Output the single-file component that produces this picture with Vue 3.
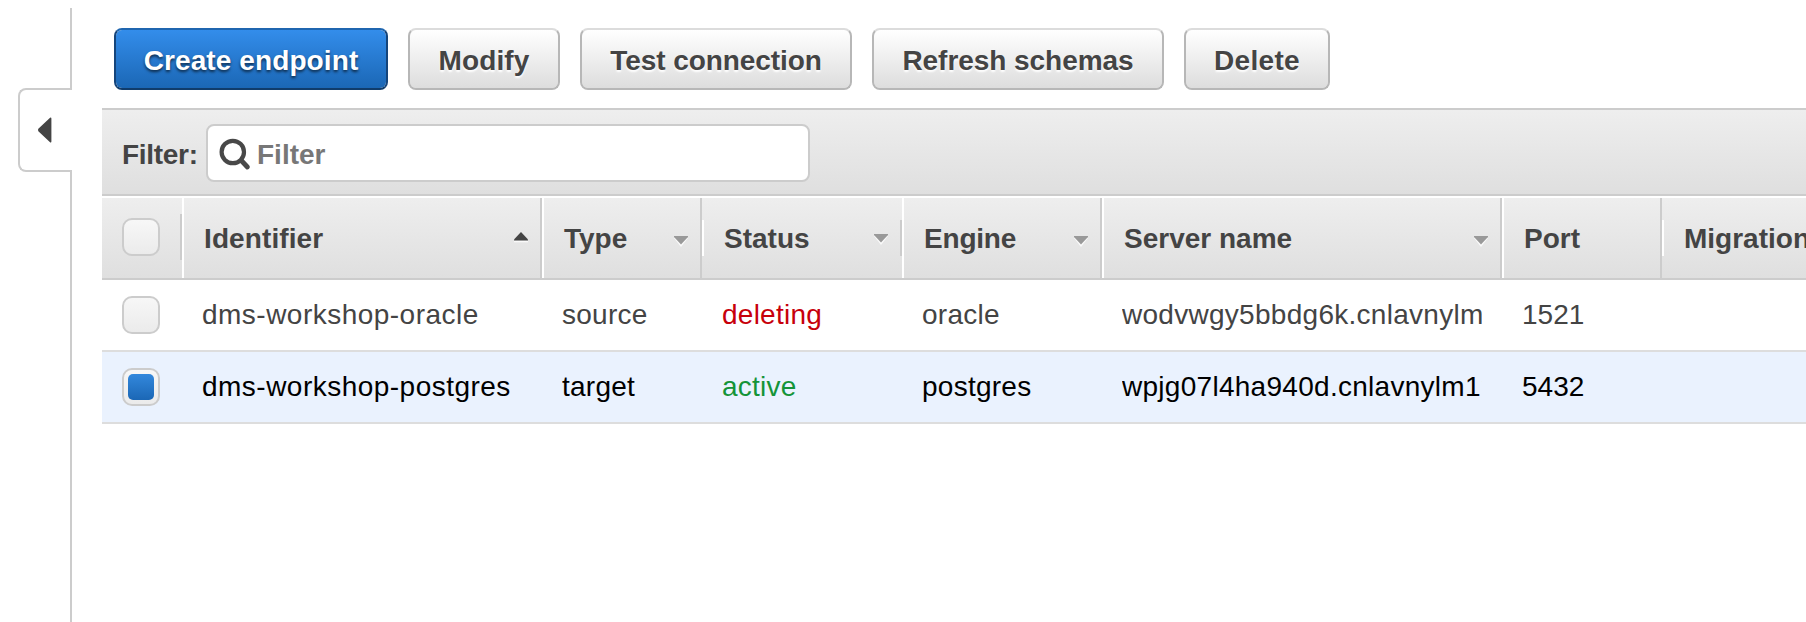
<script setup>
import { ref } from 'vue'

const filter = ref('')

const actions = [
  { label: 'Create endpoint', kind: 'create' },
  { label: 'Modify', kind: 'modify' },
  { label: 'Test connection', kind: 'test' },
  { label: 'Refresh schemas', kind: 'refresh' },
  { label: 'Delete', kind: 'delete' },
]

const columns = [
  { key: 'identifier', label: 'Identifier', sort: 'up' },
  { key: 'type', label: 'Type', sort: 'down' },
  { key: 'status', label: 'Status', sort: 'down' },
  { key: 'engine', label: 'Engine', sort: 'down' },
  { key: 'server', label: 'Server name', sort: 'down' },
  { key: 'port', label: 'Port', sort: null },
  { key: 'migration', label: 'Migration', sort: null },
]

const rows = ref([
  {
    identifier: 'dms-workshop-oracle',
    type: 'source',
    status: 'deleting',
    engine: 'oracle',
    server: 'wodvwgy5bbdg6k.cnlavnylm',
    port: '1521',
    migration: '',
    selected: false,
  },
  {
    identifier: 'dms-workshop-postgres',
    type: 'target',
    status: 'active',
    engine: 'postgres',
    server: 'wpjg07l4ha940d.cnlavnylm1r',
    port: '5432',
    migration: '',
    selected: true,
  },
])
</script>

<template>
  <div class="page">
    <aside class="rail">
      <div class="rail-line rail-top"></div>
      <button class="collapse" aria-label="Collapse navigation">
        <svg width="14" height="26" viewBox="0 0 14 26">
          <path d="M12.6 1.4 0.9 12.4v1.2l11.7 11z" fill="#444" stroke="#444" stroke-width="1.6" stroke-linejoin="round" />
        </svg>
      </button>
      <div class="rail-line rail-bottom"></div>
    </aside>

    <main class="content">
      <div class="toolbar">
        <button v-for="a in actions" :key="a.kind" class="btn" :class="a.kind">{{ a.label }}</button>
      </div>

      <div class="filter-bar">
        <label class="filter-label" for="filter">Filter:</label>
        <div class="search">
          <svg class="search-icon" width="32" height="34" viewBox="0 0 32 34">
            <circle cx="13.8" cy="15" r="11.2" fill="none" stroke="#484848" stroke-width="4.2" />
            <path d="M22.3 23.5 28.4 30" stroke="#484848" stroke-width="4.8" stroke-linecap="round" />
          </svg>
          <input id="filter" v-model="filter" class="search-input" type="text" placeholder="Filter" />
        </div>
      </div>

      <div class="grid head">
        <div class="th pick"><input class="check" type="checkbox" aria-label="Select all" /></div>
        <div v-for="c in columns" :key="c.key" class="th" :class="c.key">
          <span class="title">{{ c.label }}</span>
          <svg v-if="c.sort" class="arrow" :class="c.sort" width="14" height="12" viewBox="0 0 14 12">
            <template v-if="c.sort === 'up'">
              <path d="M0 8.5h14v1.8H0z" fill="#fff" opacity=".8" />
              <path d="M7 0 14 7.4V8.5H0V7.4z" fill="#444" />
            </template>
            <template v-else>
              <path d="M0 2h14L7 11z" fill="#fff" opacity=".8" />
              <path d="M0 0h14v1L7 8.6 0 1z" fill="#999" />
            </template>
          </svg>
        </div>
      </div>

      <div v-for="r in rows" :key="r.identifier" class="grid row" :class="{ selected: r.selected }">
        <div class="td pick"><input v-model="r.selected" class="check" type="checkbox" aria-label="Select row" /></div>
        <div v-for="c in columns" :key="c.key" class="td" :class="[c.key, c.key === 'status' ? r.status : '']">
          <span class="clip">{{ r[c.key] }}</span>
        </div>
      </div>
    </main>
  </div>
</template>

<style>
body {
  background: #fff;
  overflow: hidden;
}
</style>

<style scoped>
.page,
.page * {
  box-sizing: border-box;
}
.page {
  display: flex;
  width: 1806px;
  height: 622px;
  overflow: hidden;
  background: #fff;
  color: #444;
  font-family: "Liberation Sans", Arial, sans-serif;
  font-size: 28px;
}
.rail {
  display: flex;
  flex-direction: column;
  align-items: flex-end;
  width: 72px;
  padding-top: 8px;
  flex: none;
}
.rail-line {
  width: 2px;
  background: #ccc;
}
.rail-top {
  height: 80px;
}
.rail-bottom {
  flex: 1;
}
.collapse {
  display: flex;
  align-items: center;
  width: 54px;
  height: 84px;
  padding: 0 0 0 18px;
  border: 2px solid #ccc;
  border-right: 0;
  border-radius: 8px 0 0 8px;
  background: #fff;
}
.content {
  flex: none;
  width: 1704px;
  margin-left: 30px;
}
.toolbar {
  display: flex;
  gap: 20px;
  height: 108px;
  padding: 28px 0 0 12px;
}
.btn {
  height: 62px;
  padding: 4px 0 0;
  border: 2px solid #b7b7b7;
  border-top-color: #dcdcdc;
  border-radius: 8px;
  background: linear-gradient(#fff, #ddd) padding-box;
  color: #444;
  font: bold 28px/32px "Liberation Sans", Arial, sans-serif;
  text-shadow: 0 2px 2px #fff;
  white-space: nowrap;
}
.btn.create {
  width: 274px;
  border-color: #1f66b0 #15457b #103c6b;
  background: linear-gradient(#338deb, #1b67b5) padding-box;
  color: #fff;
  text-shadow: 0 2px 3px rgba(0, 0, 0, 0.65);
  letter-spacing: 0.1px;
}
.btn.modify {
  width: 152px;
  letter-spacing: 0.1px;
}
.btn.test {
  width: 272px;
  letter-spacing: -0.08px;
}
.btn.refresh {
  width: 292px;
  letter-spacing: -0.05px;
}
.btn.delete {
  width: 146px;
  letter-spacing: 0.3px;
}
.filter-bar {
  display: flex;
  align-items: center;
  height: 88px;
  padding: 2px 0 0 20px;
  border-top: 2px solid #ccc;
  border-bottom: 2px solid #ccc;
  background: linear-gradient(#eee, #dfdfdf);
}
.filter-label {
  width: 84px;
  padding-top: 3px;
  font-weight: bold;
  letter-spacing: -0.3px;
}
.search {
  display: flex;
  align-items: center;
  width: 604px;
  height: 58px;
  padding: 2px 12px 0 11px;
  border: 2px solid #ccc;
  border-radius: 8px;
  background: #fff;
}
.search-icon {
  flex: none;
}
.search-input {
  flex: 1;
  margin-left: 6px;
  padding: 2px 0 0;
  border: 0;
  outline: 0;
  background: none;
  color: #444;
  font: bold 28px/36px "Liberation Sans", Arial, sans-serif;
}
.search-input::placeholder {
  color: #777;
  opacity: 1;
}
.grid {
  display: grid;
  grid-template-columns: 80px 360px 160px 200px 200px 400px 160px 144px;
}
.head {
  height: 82px;
  margin-top: 2px;
  border-bottom: 2px solid #ccc;
  background: linear-gradient(#eee, #dfdfdf);
  font-weight: bold;
}
.th {
  display: flex;
  align-items: center;
  justify-content: space-between;
  padding: 0 12px 0 20px;
  border-left: 2px solid #fff;
  border-right: 2px solid #ccc;
  white-space: nowrap;
  overflow: hidden;
}
.title {
  padding-top: 2px;
}
.th.identifier .title {
  letter-spacing: 0.1px;
}
.th.engine .title {
  letter-spacing: -0.2px;
}
/* Some dividers only span the middle of the header cell. */
.th.pick {
  border-left: 0;
  border-right: 0;
  background: linear-gradient(#ccc, #ccc) right 16px / 2px 46px no-repeat;
}
.th.status {
  padding: 0 14px 0 22px;
  border: 0;
  background:
    linear-gradient(#fff, #fff) left 22px / 2px 36px no-repeat,
    linear-gradient(#ccc, #ccc) right 22px / 2px 36px no-repeat;
}
.th.migration {
  padding-left: 22px;
  border: 0;
  background: linear-gradient(#fff, #fff) left 22px / 2px 36px no-repeat;
}
.arrow {
  flex: none;
}
.arrow.down {
  margin-top: 8px;
}
.th.status .arrow {
  margin-top: 4px;
}
.row {
  height: 72px;
  border-bottom: 2px solid #ddd;
  color: #444;
}
.row.selected {
  background: #eaf2fe;
  color: #000;
}
.td {
  display: flex;
  align-items: center;
  min-width: 0;
  padding: 0 20px;
  letter-spacing: 0.25px;
}
.clip {
  width: 100%;
  overflow: hidden;
  white-space: nowrap;
}
.td.identifier {
  letter-spacing: 0.48px;
}
.td.server {
  letter-spacing: 0.28px;
}
.td.deleting {
  color: #c7000b;
}
.td.active {
  color: #149438;
}
.td.port {
  letter-spacing: 0;
}
.check {
  appearance: none;
  flex: none;
  width: 38px;
  height: 38px;
  margin: 0;
  padding: 4px;
  border: 2px solid #ccc;
  border-radius: 10px;
  background: linear-gradient(#f7f7f7, #ebebeb);
}
.th.pick .check {
  margin-top: -2px;
}
.check:checked::before {
  content: "";
  display: block;
  width: 26px;
  height: 26px;
  border-radius: 5px;
  background: linear-gradient(#3388dc, #1b67b5);
}
</style>
